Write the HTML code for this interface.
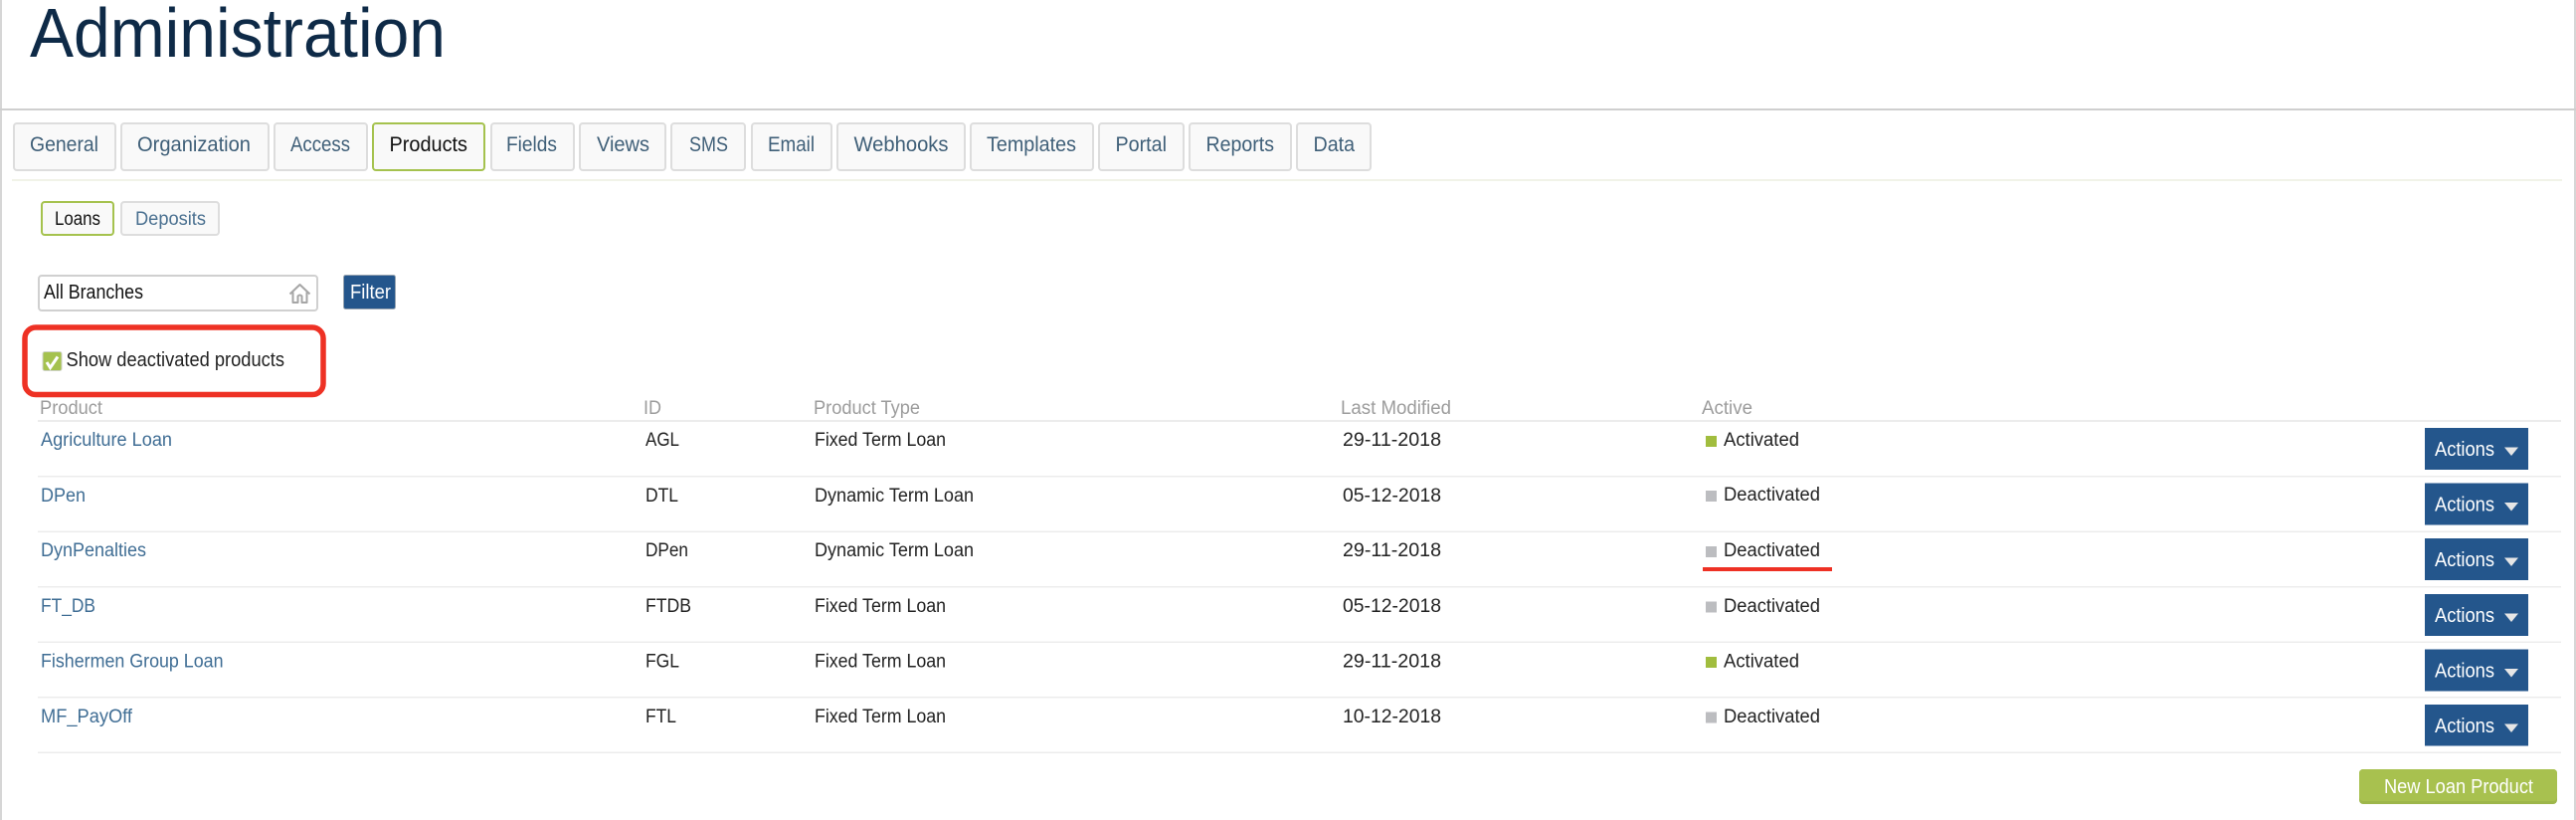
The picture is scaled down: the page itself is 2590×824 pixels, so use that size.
<!DOCTYPE html>
<html lang="en">
<head>
<meta charset="utf-8">
<title>Administration</title>
<style>
html,body{margin:0;padding:0;background:#fff;width:2590px;height:824px;overflow:hidden}
svg{display:block}
text{font-family:"Liberation Sans",sans-serif;font-size:19px;fill:#222}
.tb{fill:#f9f9f9;stroke:#dddddd;stroke-width:2}
.ta{fill:#f9f9f9;stroke:#a5c24e;stroke-width:2}
.t{font-size:21px;fill:#3f5f78}
.s{font-size:19px;fill:#4a7090}
.h{font-size:19px;fill:#9c9c9c}
.l{fill:#3f6d94}
.w{fill:#fff}
.ln{fill:#ececec}
.btn{fill:#24568c}
.on{fill:#a1bd3e}
.off{fill:#bcbdc0}
.c{fill:#e6e6e6}
</style>
</head>
<body>
<svg width="2590" height="824" viewBox="0 0 2590 824" xmlns="http://www.w3.org/2000/svg">
<rect x="0" y="0" width="2" height="824" fill="#d6d6d6"/>
<rect x="2588" y="0" width="2" height="824" fill="#d6d6d6"/>
<rect x="0" y="109" width="2590" height="2" fill="#cfcfcf"/>
<text x="30" y="57" style="font-size:70px;fill:#0e2a47" textLength="418" lengthAdjust="spacingAndGlyphs">Administration</text>

<rect class="tb" x="14" y="124" width="102" height="47" rx="3"/>
<rect class="tb" x="122" y="124" width="148" height="47" rx="3"/>
<rect class="tb" x="276" y="124" width="93" height="47" rx="3"/>
<rect class="ta" x="375" y="124" width="112" height="47" rx="3"/>
<rect class="tb" x="494" y="124" width="83" height="47" rx="3"/>
<rect class="tb" x="583" y="124" width="86" height="47" rx="3"/>
<rect class="tb" x="675" y="124" width="74" height="47" rx="3"/>
<rect class="tb" x="756" y="124" width="80" height="47" rx="3"/>
<rect class="tb" x="842" y="124" width="128" height="47" rx="3"/>
<rect class="tb" x="976" y="124" width="123" height="47" rx="3"/>
<rect class="tb" x="1105" y="124" width="85" height="47" rx="3"/>
<rect class="tb" x="1196" y="124" width="102" height="47" rx="3"/>
<rect class="tb" x="1304" y="124" width="74" height="47" rx="3"/>
<text class="t" x="30" y="152" textLength="69" lengthAdjust="spacingAndGlyphs">General</text>
<text class="t" x="138" y="152" textLength="114" lengthAdjust="spacingAndGlyphs">Organization</text>
<text class="t" x="292" y="152" textLength="60" lengthAdjust="spacingAndGlyphs">Access</text>
<text class="t" x="391.5" y="152" textLength="78.5" lengthAdjust="spacingAndGlyphs" style="fill:#111">Products</text>
<text class="t" x="509" y="152" textLength="51" lengthAdjust="spacingAndGlyphs">Fields</text>
<text class="t" x="600" y="152" textLength="53" lengthAdjust="spacingAndGlyphs">Views</text>
<text class="t" x="693" y="152" textLength="39" lengthAdjust="spacingAndGlyphs">SMS</text>
<text class="t" x="772" y="152" textLength="47" lengthAdjust="spacingAndGlyphs">Email</text>
<text class="t" x="858.5" y="152" textLength="95" lengthAdjust="spacingAndGlyphs">Webhooks</text>
<text class="t" x="992" y="152" textLength="90" lengthAdjust="spacingAndGlyphs">Templates</text>
<text class="t" x="1121.5" y="152" textLength="51.5" lengthAdjust="spacingAndGlyphs">Portal</text>
<text class="t" x="1212.5" y="152" textLength="68.5" lengthAdjust="spacingAndGlyphs">Reports</text>
<text class="t" x="1320.5" y="152" textLength="41.5" lengthAdjust="spacingAndGlyphs">Data</text>
<rect x="12" y="180" width="2564" height="2" fill="#f1f3e8"/>

<rect class="ta" x="42" y="203" width="72" height="33" rx="3"/>
<rect class="tb" x="122" y="203" width="98" height="33" rx="3"/>
<text class="s" x="55" y="226" textLength="46" lengthAdjust="spacingAndGlyphs" style="fill:#111">Loans</text>
<text class="s" x="136" y="226" textLength="71" lengthAdjust="spacingAndGlyphs">Deposits</text>

<rect x="39" y="277" width="280" height="35" rx="3" fill="#fff" stroke="#d0d0d0" stroke-width="2"/>
<text x="44" y="300" style="font-size:20px;fill:#111" textLength="100" lengthAdjust="spacingAndGlyphs">All Branches</text>
<path d="M291.5 295.5 L301.5 286 L311.5 295.5 M294.5 293.5 V304 H299.5 V297.5 Q301.5 295.5 303.5 297.5 V304 H308.5 V293.5" fill="none" stroke="#a6a6a6" stroke-width="2" stroke-linejoin="round"/>

<rect x="345.5" y="276.5" width="52" height="34" rx="2" fill="#24568c" stroke="#9aa6b2" stroke-width="1"/>
<text class="w" x="352" y="300" style="font-size:20px" textLength="41" lengthAdjust="spacingAndGlyphs">Filter</text>

<rect x="25" y="329" width="300" height="67.5" rx="11" fill="#fff" stroke="#ee3124" stroke-width="5.5"/>
<rect x="43" y="353.5" width="19" height="19" rx="2" fill="#a5c24e" stroke="#cfd3c8" stroke-width="1"/>
<path d="M47 364 L50.5 369.5 L58 358.5" fill="none" stroke="#fff" stroke-width="3"/>
<text x="66.5" y="368" style="font-size:20px" textLength="219.5" lengthAdjust="spacingAndGlyphs">Show deactivated products</text>

<text class="h" x="40" y="416" textLength="63" lengthAdjust="spacingAndGlyphs">Product</text>
<text class="h" x="647" y="416" textLength="18" lengthAdjust="spacingAndGlyphs">ID</text>
<text class="h" x="818" y="416" textLength="107" lengthAdjust="spacingAndGlyphs">Product Type</text>
<text class="h" x="1348" y="416" textLength="111" lengthAdjust="spacingAndGlyphs">Last Modified</text>
<text class="h" x="1711" y="416" textLength="51" lengthAdjust="spacingAndGlyphs">Active</text>

<rect class="ln" x="38" y="422" width="2537" height="2"/>
<rect class="ln" x="38" y="478" width="2537" height="1.5"/>
<rect class="ln" x="38" y="533.5" width="2537" height="1.5"/>
<rect class="ln" x="38" y="589" width="2537" height="1.5"/>
<rect class="ln" x="38" y="644.5" width="2537" height="1.5"/>
<rect class="ln" x="38" y="700" width="2537" height="1.5"/>
<rect class="ln" x="38" y="755.5" width="2537" height="1.5"/>

<text class="l" x="41" y="448" textLength="132" lengthAdjust="spacingAndGlyphs">Agriculture Loan</text>
<text x="649" y="448" textLength="34" lengthAdjust="spacingAndGlyphs">AGL</text>
<text x="819" y="448" textLength="132" lengthAdjust="spacingAndGlyphs">Fixed Term Loan</text>
<text x="1350" y="448" textLength="99" lengthAdjust="spacingAndGlyphs">29-11-2018</text>
<rect class="on" x="1715" y="438" width="11" height="11"/>
<text x="1733" y="448" textLength="76" lengthAdjust="spacingAndGlyphs">Activated</text>

<text class="l" x="41" y="504" textLength="45" lengthAdjust="spacingAndGlyphs">DPen</text>
<text x="649" y="504" textLength="33" lengthAdjust="spacingAndGlyphs">DTL</text>
<text x="819" y="504" textLength="160" lengthAdjust="spacingAndGlyphs">Dynamic Term Loan</text>
<text x="1350" y="504" textLength="99" lengthAdjust="spacingAndGlyphs">05-12-2018</text>
<rect class="off" x="1715" y="493" width="11" height="11"/>
<text x="1733" y="503" textLength="97" lengthAdjust="spacingAndGlyphs">Deactivated</text>

<text class="l" x="41" y="559" textLength="106" lengthAdjust="spacingAndGlyphs">DynPenalties</text>
<text x="649" y="559" textLength="43" lengthAdjust="spacingAndGlyphs">DPen</text>
<text x="819" y="559" textLength="160" lengthAdjust="spacingAndGlyphs">Dynamic Term Loan</text>
<text x="1350" y="559" textLength="99" lengthAdjust="spacingAndGlyphs">29-11-2018</text>
<rect class="off" x="1715" y="549" width="11" height="11"/>
<text x="1733" y="559" textLength="97" lengthAdjust="spacingAndGlyphs">Deactivated</text>
<rect x="1712" y="570" width="130" height="4" fill="#ee3124"/>

<text class="l" x="41" y="615" textLength="55" lengthAdjust="spacingAndGlyphs">FT_DB</text>
<text x="649" y="615" textLength="46" lengthAdjust="spacingAndGlyphs">FTDB</text>
<text x="819" y="615" textLength="132" lengthAdjust="spacingAndGlyphs">Fixed Term Loan</text>
<text x="1350" y="615" textLength="99" lengthAdjust="spacingAndGlyphs">05-12-2018</text>
<rect class="off" x="1715" y="604.5" width="11" height="11"/>
<text x="1733" y="615" textLength="97" lengthAdjust="spacingAndGlyphs">Deactivated</text>

<text class="l" x="41" y="670.5" textLength="183.5" lengthAdjust="spacingAndGlyphs">Fishermen Group Loan</text>
<text x="649" y="670.5" textLength="34" lengthAdjust="spacingAndGlyphs">FGL</text>
<text x="819" y="670.5" textLength="132" lengthAdjust="spacingAndGlyphs">Fixed Term Loan</text>
<text x="1350" y="670.5" textLength="99" lengthAdjust="spacingAndGlyphs">29-11-2018</text>
<rect class="on" x="1715" y="660" width="11" height="11"/>
<text x="1733" y="670.5" textLength="76" lengthAdjust="spacingAndGlyphs">Activated</text>

<text class="l" x="41" y="726" textLength="92" lengthAdjust="spacingAndGlyphs">MF_PayOff</text>
<text x="649" y="726" textLength="31" lengthAdjust="spacingAndGlyphs">FTL</text>
<text x="819" y="726" textLength="132" lengthAdjust="spacingAndGlyphs">Fixed Term Loan</text>
<text x="1350" y="726" textLength="99" lengthAdjust="spacingAndGlyphs">10-12-2018</text>
<rect class="off" x="1715" y="715.5" width="11" height="11"/>
<text x="1733" y="726" textLength="97" lengthAdjust="spacingAndGlyphs">Deactivated</text>

<rect class="btn" x="2438" y="430" width="104" height="42"/>
<text class="w" x="2448" y="458" style="font-size:20px" textLength="60" lengthAdjust="spacingAndGlyphs">Actions</text>
<path class="c" d="M2518 449.5 H2532 L2525 458 Z"/>
<rect class="btn" x="2438" y="485.5" width="104" height="42"/>
<text class="w" x="2448" y="513.5" style="font-size:20px" textLength="60" lengthAdjust="spacingAndGlyphs">Actions</text>
<path class="c" d="M2518 505 H2532 L2525 513.5 Z"/>
<rect class="btn" x="2438" y="541" width="104" height="42"/>
<text class="w" x="2448" y="569" style="font-size:20px" textLength="60" lengthAdjust="spacingAndGlyphs">Actions</text>
<path class="c" d="M2518 560.5 H2532 L2525 569 Z"/>
<rect class="btn" x="2438" y="597" width="104" height="42"/>
<text class="w" x="2448" y="625" style="font-size:20px" textLength="60" lengthAdjust="spacingAndGlyphs">Actions</text>
<path class="c" d="M2518 616.5 H2532 L2525 625 Z"/>
<rect class="btn" x="2438" y="652.5" width="104" height="42"/>
<text class="w" x="2448" y="680.5" style="font-size:20px" textLength="60" lengthAdjust="spacingAndGlyphs">Actions</text>
<path class="c" d="M2518 672 H2532 L2525 680.5 Z"/>
<rect class="btn" x="2438" y="708" width="104" height="41.5"/>
<text class="w" x="2448" y="736" style="font-size:20px" textLength="60" lengthAdjust="spacingAndGlyphs">Actions</text>
<path class="c" d="M2518 727.5 H2532 L2525 736 Z"/>

<rect x="2372" y="773" width="199" height="35" rx="4" fill="#9db64a"/>
<rect x="2372" y="773" width="199" height="32" rx="4" fill="#a8c14f"/>
<text class="w" x="2397" y="797" style="font-size:20px" textLength="150" lengthAdjust="spacingAndGlyphs">New Loan Product</text>
</svg>
</body>
</html>
